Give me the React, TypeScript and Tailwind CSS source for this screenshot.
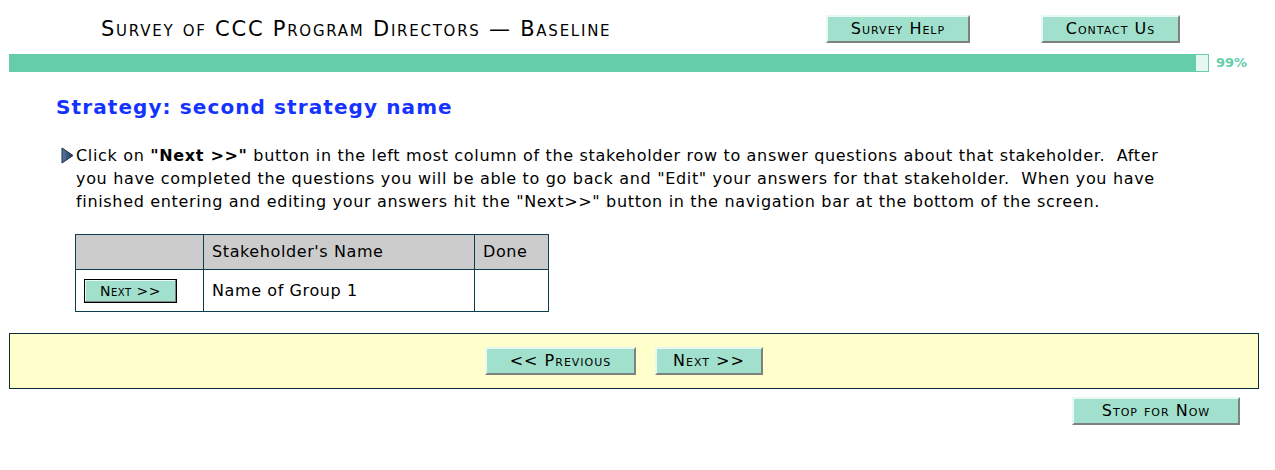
import React from 'react';

const font = { fontFamily: '"DejaVu Sans", Verdana, sans-serif' };

function Btn({ label, className = '' }: { label: string; className?: string }) {
  return (
    <button
      type="button"
      className={`h-[28px] border-2 border-t-[#e8f8f2] border-l-[#e8f8f2] border-r-[#808080] border-b-[#808080] bg-[#a0e0cc] text-[16px] leading-none tracking-[1px] text-black [font-variant:small-caps] ${className}`}
    >
      {label}
    </button>
  );
}

export default function App() {
  return (
    <div className="h-[470px] w-[1275px] bg-white text-black" style={font}>
      <header className="flex h-[54px] items-center pt-[4px]">
        <h1 className="ml-[101px] w-[725px] text-[21px] leading-none tracking-[1.75px] [font-variant:small-caps]">
          Survey of CCC Program Directors — Baseline
        </h1>
        <Btn label="Survey Help" className="w-[144px]" />
        <Btn label="Contact Us" className="ml-[71px] w-[139px]" />
      </header>

      <div className="flex h-[18px] items-center">
        <div className="ml-[9px] flex h-[18px] w-[1200px] bg-[#66cdaa]">
          <div className="flex-1" />
          <div className="my-[1px] mr-[1px] w-[12px] bg-[#e6f7f1]" />
        </div>
        <span className="ml-[7px] text-[13px] font-bold text-[#66cdaa]">99%</span>
      </div>

      <h2 className="ml-[56px] mt-[22px] text-[20px] font-bold leading-[26px] tracking-[1.1px] text-[#1433ff]">
        Strategy: second strategy name
      </h2>

      <div className="ml-[61px] mt-[24px] flex">
        <svg width="13" height="17" viewBox="0 0 13 17" className="mt-[3px] shrink-0">
          <defs>
            <linearGradient id="tri" x1="0" y1="0" x2="1" y2="0">
              <stop offset="0" stopColor="#5a7aa8" />
              <stop offset="1" stopColor="#1f3556" />
            </linearGradient>
          </defs>
          <path d="M1 1 L12 8.5 L1 16 Z" fill="url(#tri)" stroke="#1a2a44" strokeWidth="1" />
        </svg>
        <p className="ml-[2px] w-[1100px] text-[16px] leading-[23px] tracking-[0.67px]">
          Click on <b>"Next &gt;&gt;"</b> button in the left most column of the stakeholder row to answer questions about that
          stakeholder.&nbsp; After you have completed the questions you will be able to go back and "Edit" your answers for that
          stakeholder.&nbsp; When you have finished entering and editing your answers hit the "Next&gt;&gt;" button in the
          navigation bar at the bottom of the screen.
        </p>
      </div>

      <table className="ml-[75px] mt-[21px] border-collapse text-[16px] tracking-[0.6px]">
        <thead>
          <tr className="h-[35px] bg-[#cccccc]">
            <th className="w-[128px] border border-[#0e3e4e]" />
            <th className="w-[271px] border border-[#0e3e4e] px-[8px] text-left font-normal">Stakeholder's Name</th>
            <th className="w-[74px] border border-[#0e3e4e] px-[8px] text-left font-normal">Done</th>
          </tr>
        </thead>
        <tbody>
          <tr className="h-[42px]">
            <td className="border border-[#0e3e4e] pl-[8px]">
              <button
                type="button"
                className="h-[24px] w-[93px] border border-black bg-[#a0e0cc] text-[14px] leading-none tracking-[0.5px] shadow-[inset_-1px_-1px_0_#808080,inset_1px_1px_0_#e8f8f2] [font-variant:small-caps]"
              >
                Next &gt;&gt;
              </button>
            </td>
            <td className="border border-[#0e3e4e] px-[8px]">Name of Group 1</td>
            <td className="border border-[#0e3e4e]" />
          </tr>
        </tbody>
      </table>

      <div className="ml-[9px] mt-[21px] flex h-[56px] w-[1250px] items-center justify-center border border-[#0a2d3a] bg-[#ffffcc] pr-[20px]">
        <Btn label="<< Previous" className="w-[151px]" />
        <Btn label="Next >>" className="ml-[19px] w-[108px]" />
      </div>

      <div className="mt-[8px] flex justify-end pr-[35px]">
        <Btn label="Stop for Now" className="w-[168px]" />
      </div>
    </div>
  );
}
